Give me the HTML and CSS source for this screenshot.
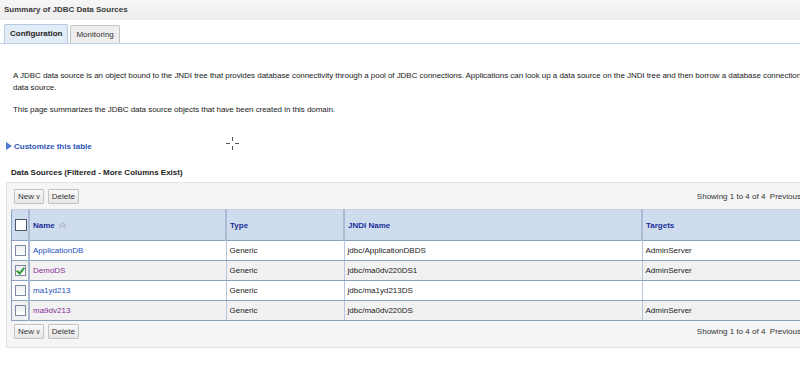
FILE: index.html
```html
<!DOCTYPE html>
<html lang="en">
<head>
  <meta charset="UTF-8" />
  <title>Summary of JDBC Data Sources</title>
  <link rel="stylesheet" href="styles.css">
</head>
<body>
  <div class="page">
    <div class="title-bar">Summary of JDBC Data Sources</div>

    <div class="tabs">
      <span class="tab active">Configuration</span>
      <span class="tab">Monitoring</span>
    </div>

    <div class="intro">
      <p>A JDBC data source is an object bound to the JNDI tree that provides database connectivity through a pool of JDBC connections. Applications can look up a data source on the JNDI tree and then borrow a database connection from a data source.</p>
      <p>This page summarizes the JDBC data source objects that have been created in this domain.</p>
    </div>

    <div class="customize">
      <span class="arrow"></span><a href="#">Customize this table</a>
      <span class="cursor"><i class="h"></i><i class="v"></i></span>
    </div>

    <h2 class="section">Data Sources (Filtered - More Columns Exist)</h2>

    <div class="panel">
      <div class="toolbar">
        <button class="btn">New <span class="caret">v</span></button>
        <button class="btn">Delete</button>
        <span class="paging">Showing 1 to 4 of 4 &nbsp;Previous | Next</span>
      </div>

      <table class="grid">
        <thead>
          <tr>
            <th class="chk"><span class="box"></span></th>
            <th class="c-name">Name
              <svg class="sort" width="9" height="7" viewBox="0 0 9 7"><path d="M1 4 L4.5 1 L8 4 M1 6.5 L4.5 3.5 L8 6.5" fill="none" stroke="#a0a8b4" stroke-width="1"/></svg>
            </th>
            <th class="c-type">Type</th>
            <th class="c-jndi">JNDI Name</th>
            <th class="c-targets">Targets</th>
          </tr>
        </thead>
        <tbody>
          <tr>
            <td class="chk"><span class="box"></span></td>
            <td><a href="#">ApplicationDB</a></td>
            <td>Generic</td>
            <td>jdbc/ApplicationDBDS</td>
            <td>AdminServer</td>
          </tr>
          <tr class="alt">
            <td class="chk"><span class="box checked"></span></td>
            <td><a class="visited" href="#">DemoDS</a></td>
            <td>Generic</td>
            <td>jdbc/ma0dv220DS1</td>
            <td>AdminServer</td>
          </tr>
          <tr>
            <td class="chk"><span class="box"></span></td>
            <td><a href="#">ma1yd213</a></td>
            <td>Generic</td>
            <td>jdbc/ma1yd213DS</td>
            <td></td>
          </tr>
          <tr class="alt">
            <td class="chk"><span class="box"></span></td>
            <td><a class="visited" href="#">ma9dv213</a></td>
            <td>Generic</td>
            <td>jdbc/ma0dv220DS</td>
            <td>AdminServer</td>
          </tr>
        </tbody>
      </table>

      <div class="toolbar bottom">
        <button class="btn">New <span class="caret">v</span></button>
        <button class="btn">Delete</button>
        <span class="paging">Showing 1 to 4 of 4 &nbsp;Previous | Next</span>
      </div>
    </div>
  </div>
</body>
</html>
```

FILE: styles.css
```css
:root {
  --link: #2450b8;
  --visited: #8a2a96;
  --head-bg: #cfdcee;
  --head-text: #1b2f9a;
  --row-line: #8aa0bf;
  --col-line: #b8c6da;
  --text: #222;
}
html, body {
  margin: 0;
  overflow: hidden;
}
body {
  font-family: 'Liberation Sans', Tahoma, sans-serif;
  font-size: 8px;
  color: var(--text);
  background: #fff;
}
.page {
  width: 900px;
}
.title-bar {
  height: 20px;
  line-height: 20px;
  padding-left: 4px;
  font-weight: bold;
  color: #3a3a3a;
  background: linear-gradient(#f7f7f7, #ececec);
  width: 796px;
}
.tabs {
  display: flex;
  gap: 2px;
  margin-top: 4px;
  padding-left: 4px;
  border-bottom: 1px solid #bcd0e8;
  width: 796px;
  height: 19px;
  align-items: flex-end;
}
.tab {
  height: 17px;
  line-height: 17px;
  padding: 0 5px;
  border: 1px solid #c4c4c4;
  border-bottom: none;
  background: #eeeeee;
  color: #333;
  border-radius: 2px 2px 0 0;
}
.tab.active {
  height: 18px;
  line-height: 18px;
  background: #e2ecf7;
  border-color: #b5c8e0;
  font-weight: bold;
  color: #222;
}
.intro {
  padding: 0 13px;
  margin-top: 26px;
  width: 818px;
  letter-spacing: -0.05px;
}
.intro p {
  margin: 0 0 10px 0;
  line-height: 12px;
}
.customize {
  position: relative;
  margin-top: 24px;
  padding-left: 6px;
  display: flex;
  align-items: center;
  height: 12px;
}
.customize a {
  color: #2a55b5;
  font-weight: bold;
  text-decoration: none;
  margin-left: 2px;
}
.arrow {
  width: 0;
  height: 0;
  border-left: 6px solid #4b7ad0;
  border-top: 4px solid transparent;
  border-bottom: 4px solid transparent;
}
.cursor {
  position: absolute;
  left: 226px;
  top: -3px;
  width: 13px;
  height: 13px;
}
.cursor .h, .cursor .v {
  position: absolute;
}
.cursor .h {
  left: 0;
  top: 6px;
  width: 13px;
  height: 1px;
  background: linear-gradient(90deg, #555 0 4px, transparent 4px 9px, #555 9px);
}
.cursor .v {
  left: 6px;
  top: 0;
  width: 1px;
  height: 13px;
  background: linear-gradient(#555 0 4px, transparent 4px 9px, #555 9px);
}
.section {
  font-size: 8px;
  font-weight: bold;
  margin: 15px 0 0 11px;
  color: #222;
  line-height: 12px;
}
.panel {
  margin: 3px 0 0 6px;
  padding: 5px 4px 8px 4px;
  background: #f5f5f5;
  border: 1px solid #e2e2e2;
  width: 880px;
}
.toolbar {
  display: flex;
  align-items: center;
  gap: 4px;
  height: 16px;
  padding-left: 3px;
  margin-bottom: 5px;
}
.toolbar.bottom {
  margin: 2px 0 0 0;
}
.btn {
  font-family: inherit;
  font-size: 8px;
  color: #333;
  height: 15px;
  padding: 0 3px;
  border: 1px solid #c2c2c2;
  background: linear-gradient(#fafafa, #e6e6e6);
  border-radius: 1px;
}
.caret {
  font-size: 7px;
}
.paging {
  margin-left: 614px;
  color: #333;
}
.grid {
  border-collapse: collapse;
  background: #fff;
  border: 1px solid var(--row-line);
  table-layout: fixed;
  width: 870px;
}
.grid th {
  background: var(--head-bg);
  color: var(--head-text);
  text-align: left;
  font-weight: bold;
  height: 30px;
  padding: 0 3px;
  border-left: 2px solid #a9bad2;
  border-bottom: 1px solid var(--row-line);
  border-top: 1px solid #c9d3e0;
}
.grid td {
  height: 19px;
  padding: 0 3px;
  border-left: 1px solid var(--col-line);
  border-bottom: 1px solid var(--row-line);
  white-space: nowrap;
}
.grid .chk {
  width: 13px;
  border-left: none;
  padding: 0 0 0 3px;
}
.grid th.chk + th, .grid td.chk + td {
  border-left: 2px solid #a9bad2;
}
.c-name { width: 189px; }
.c-type { width: 110px; }
.c-jndi { width: 290px; }
.grid tr.alt td {
  background: #f1f1f1;
}
.grid a {
  color: var(--link);
  text-decoration: none;
}
.grid a.visited {
  color: var(--visited);
}
.sort {
  vertical-align: middle;
  margin-left: 1px;
}
.box {
  display: inline-block;
  width: 9px;
  height: 9px;
  border: 1px solid #7c8ba0;
  background: linear-gradient(#e9ecf0, #fff);
  vertical-align: middle;
  position: relative;
}
th .box {
  width: 10px;
  height: 10px;
  border-color: #4a5568;
  background: #fff;
}
.box.checked::after {
  content: "";
  position: absolute;
  left: 2px;
  top: 0px;
  width: 3px;
  height: 6px;
  border: solid #2e9a2e;
  border-width: 0 2px 2px 0;
  transform: rotate(40deg);
}
```
